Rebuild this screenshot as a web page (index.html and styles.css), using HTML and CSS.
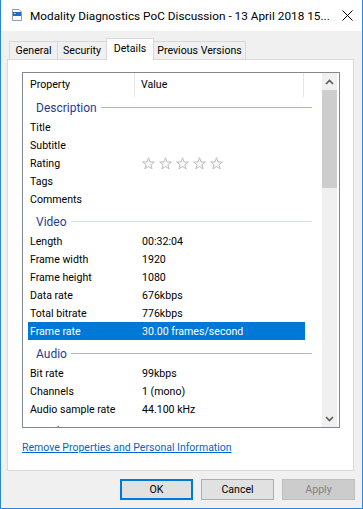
FILE: index.html
```html
<!DOCTYPE html>
<html>
<head>
<meta charset="utf-8">
<link rel="stylesheet" href="styles.css">
</head>
<body>
<div class="window">
  <div class="titlebar">
    <svg class="app-icon" width="10" height="12" viewBox="0 0 10 12">
      <path d="M0.5 0.5 H7 L9.5 3 V11.5 H0.5 Z" fill="#fff" stroke="#8e9db0"/>
      <rect x="1" y="3" width="8" height="4" fill="#1c6ec4"/>
      <rect x="2" y="4" width="2" height="1" fill="#9cc7ee"/>
    </svg>
    <div class="title">Modality Diagnostics PoC Discussion - 13 April 2018 15...</div>
    <svg class="close" width="11" height="11" viewBox="0 0 11 11">
      <path d="M0.5 0.5 L10.5 10.5 M10.5 0.5 L0.5 10.5" stroke="#000" stroke-width="1"/>
    </svg>
  </div>
  <div class="body">
    <div class="tabs">
      <div class="tab t-general">General</div>
      <div class="tab t-security">Security</div>
      <div class="tab t-details active">Details</div>
      <div class="tab t-prev">Previous Versions</div>
    </div>
    <div class="panel">
      <div class="listview">
        <div class="lv-main">
          <div class="lv-header">
            <div class="hcol hcol1">Property</div>
            <div class="hcol hcol2">Value</div>
          </div>
          <div class="lv-rows">
            <div class="group first"><span>Description</span><span class="line"></span></div>
            <div class="row"><span class="k">Title</span><span class="v"></span></div>
            <div class="row"><span class="k">Subtitle</span><span class="v"></span></div>
            <div class="row"><span class="k">Rating</span><span class="v stars">
              <svg class="star" width="13" height="13" viewBox="0 0 13 13"><polygon points="6.5,0.7 7.97,4.88 12.4,4.98 8.88,7.67 10.15,11.92 6.5,9.4 2.85,11.92 4.12,7.67 0.6,4.98 5.03,4.88"/></svg>
              <svg class="star" width="13" height="13" viewBox="0 0 13 13"><polygon points="6.5,0.7 7.97,4.88 12.4,4.98 8.88,7.67 10.15,11.92 6.5,9.4 2.85,11.92 4.12,7.67 0.6,4.98 5.03,4.88"/></svg>
              <svg class="star" width="13" height="13" viewBox="0 0 13 13"><polygon points="6.5,0.7 7.97,4.88 12.4,4.98 8.88,7.67 10.15,11.92 6.5,9.4 2.85,11.92 4.12,7.67 0.6,4.98 5.03,4.88"/></svg>
              <svg class="star" width="13" height="13" viewBox="0 0 13 13"><polygon points="6.5,0.7 7.97,4.88 12.4,4.98 8.88,7.67 10.15,11.92 6.5,9.4 2.85,11.92 4.12,7.67 0.6,4.98 5.03,4.88"/></svg>
              <svg class="star" width="13" height="13" viewBox="0 0 13 13"><polygon points="6.5,0.7 7.97,4.88 12.4,4.98 8.88,7.67 10.15,11.92 6.5,9.4 2.85,11.92 4.12,7.67 0.6,4.98 5.03,4.88"/></svg>
            </span></div>
            <div class="row"><span class="k">Tags</span><span class="v"></span></div>
            <div class="row"><span class="k">Comments</span><span class="v"></span></div>
            <div class="group faint"><span>Video</span><span class="line"></span></div>
            <div class="row"><span class="k">Length</span><span class="v">00:32:04</span></div>
            <div class="row"><span class="k">Frame width</span><span class="v">1920</span></div>
            <div class="row"><span class="k">Frame height</span><span class="v">1080</span></div>
            <div class="row"><span class="k">Data rate</span><span class="v">676kbps</span></div>
            <div class="row"><span class="k">Total bitrate</span><span class="v">776kbps</span></div>
            <div class="row sel"><span class="k">Frame rate</span><span class="v">30.00 frames/second</span></div>
            <div class="group"><span>Audio</span><span class="line"></span></div>
            <div class="row"><span class="k">Bit rate</span><span class="v">99kbps</span></div>
            <div class="row"><span class="k">Channels</span><span class="v">1 (mono)</span></div>
            <div class="row"><span class="k">Audio sample rate</span><span class="v">44.100 kHz</span></div>
            <div class="group"><span>Media</span><span class="line"></span></div>
          </div>
        </div>
        <div class="scrollbar">
          <div class="sb-btn">
            <svg width="15" height="17" viewBox="0 0 15 17"><polyline points="4,11 7.5,7.5 11,11" fill="none" stroke="#5c5c54" stroke-width="1.6"/></svg>
          </div>
          <div class="sb-track"><div class="sb-thumb"></div></div>
          <div class="sb-btn">
            <svg width="15" height="17" viewBox="0 0 15 17"><polyline points="4,7 7.5,10.5 11,7" fill="none" stroke="#5c5c54" stroke-width="1.6"/></svg>
          </div>
        </div>
      </div>
      <a class="link" href="#">Remove Properties and Personal Information</a>
    </div>
    <div class="buttons">
      <div class="btn default">OK</div>
      <div class="btn">Cancel</div>
      <div class="btn disabled">Apply</div>
    </div>
  </div>
</div>
</body>
</html>
```
FILE: styles.css
```css
* { box-sizing: border-box; }
html, body { margin: 0; padding: 0; background: #fff; }
body {
  font-family: Roboto, "Liberation Sans", sans-serif;
  font-size: 10.6px;
  color: #000;
}
.window {
  width: 363px;
  height: 509px;
  border: 1px solid #2b88d8;
  border-top: none;
  background: #f0f0f0;
  display: flex;
  flex-direction: column;
}
.titlebar {
  height: 31px;
  flex-shrink: 0;
  background: #fff;
  display: flex;
  align-items: center;
  padding-left: 11px;
}
.app-icon { margin-right: 8px; flex-shrink: 0; margin-top: -1px; }
.title {
  flex: 1;
  font-size: 11.8px;
  white-space: nowrap;
  overflow: hidden;
}
.close { margin-right: 9px; margin-left: 8px; flex-shrink: 0; }
.body {
  flex: 1;
  padding: 7px 8px 0 6px;
  display: flex;
  flex-direction: column;
}
.tabs {
  display: flex;
  align-items: flex-end;
  height: 21px;
  padding-left: 2px;
}
.tab {
  height: 18px;
  border: 1px solid #d9d9d9;
  border-bottom: none;
  background: #f0f0f0;
  display: flex;
  align-items: center;
  justify-content: center;
  margin-left: -1px;
  padding-bottom: 1px;
}
.t-general { width: 49px; margin-left: 0; }
.t-security { width: 50px; }
.t-details { width: 48px; }
.t-prev { width: 93px; }
.tab.active {
  height: 22px;
  background: #fff;
  margin-bottom: -1px;
  position: relative;
  z-index: 2;
  padding-bottom: 3px;
}
.panel {
  height: 412px;
  background: #fff;
  border: 1px solid #d9d9d9;
  padding: 12px 0 0 14px;
  display: flex;
  flex-direction: column;
}
.listview {
  width: 318px;
  height: 356px;
  border: 1px solid #828790;
  display: flex;
  flex-shrink: 0;
}
.lv-main {
  width: 299px;
  display: flex;
  flex-direction: column;
}
.lv-header {
  height: 24px;
  display: flex;
  flex-shrink: 0;
}
.hcol {
  display: flex;
  align-items: center;
  border-right: 1px solid #e5e5e5;
  padding-bottom: 1px;
}
.hcol1 { width: 112px; padding-left: 7px; }
.hcol2 { width: 169px; padding-left: 6px; }
.lv-rows {
  flex: 1;
  overflow: hidden;
}
.group {
  display: flex;
  align-items: center;
  height: 24px;
  padding: 3px 10px 0 13px;
  color: #1e3c96;
  font-size: 12px;
}
.group.first { height: 21px; padding-top: 0; }
.group .line {
  flex: 1;
  height: 1px;
  background: #a3b7e5;
  margin-left: 4px;
}
.group.faint .line { background: #d3e2f3; }
.row {
  display: flex;
  align-items: center;
  height: 18px;
  width: 277px;
  margin-left: 5px;
  white-space: nowrap;
}
.row .k { width: 114px; padding-left: 2px; flex-shrink: 0; }
.row .v { flex: 1; }
.row.sel { background: #0078d7; color: #fff; }
.stars { display: flex; gap: 4px; align-items: center; }
.star polygon { fill: #fafafa; stroke: #bdbdbd; stroke-width: 1; }
.scrollbar {
  width: 15px;
  margin-right: 2px;
  display: flex;
  flex-direction: column;
  background: #f0f0f0;
}
.sb-btn { height: 17px; flex-shrink: 0; }
.sb-btn svg { display: block; }
.sb-track { flex: 1; }
.sb-thumb { height: 98px; background: #cdcdcd; }
.link {
  margin-top: 12px;
  color: #0066cc;
  text-decoration: underline;
  align-self: flex-start;
  line-height: 15px;
  font-size: 10.5px;
}
.buttons {
  display: flex;
  justify-content: flex-end;
  gap: 8px;
  margin-top: 8px;
  margin-right: -1px;
}
.btn {
  width: 73px;
  height: 21px;
  background: #e1e1e1;
  border: 1px solid #adadad;
  display: flex;
  align-items: center;
  justify-content: center;
}
.btn.default { border: 2px solid #0078d7; }
.btn.disabled { background: #cccccc; border-color: #bfbfbf; color: #838383; }
```
